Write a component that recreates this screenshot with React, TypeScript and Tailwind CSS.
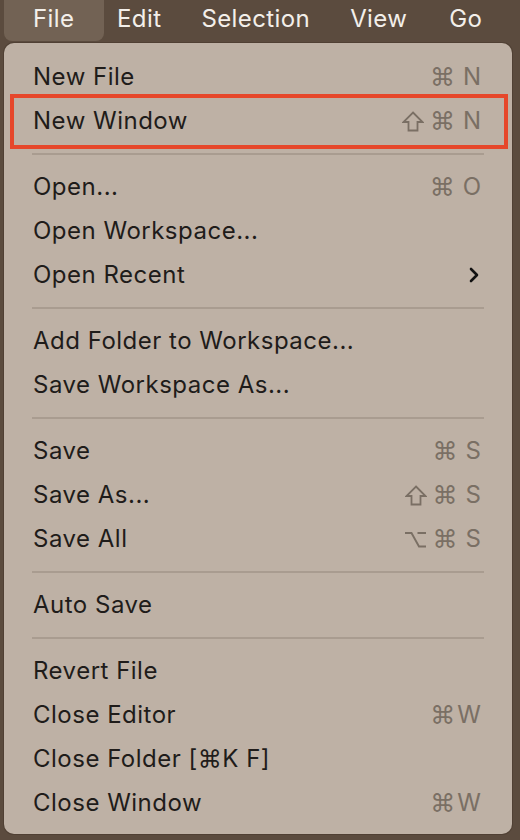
import React from 'react'

type Item = { label: string; keys?: string[]; tight?: boolean; sub?: boolean; marked?: boolean }

// groups of menu rows, separators between groups
const GROUPS: Item[][] = [
  [
    { label: 'New File', keys: ['⌘', 'N'] },
    { label: 'New Window', keys: ['⇧', '⌘', 'N'], marked: true },
  ],
  [
    { label: 'Open...', keys: ['⌘', 'O'] },
    { label: 'Open Workspace...' },
    { label: 'Open Recent', sub: true },
  ],
  [{ label: 'Add Folder to Workspace...' }, { label: 'Save Workspace As...' }],
  [
    { label: 'Save', keys: ['⌘', 'S'] },
    { label: 'Save As...', keys: ['⇧', '⌘', 'S'] },
    { label: 'Save All', keys: ['⌥', '⌘', 'S'] },
  ],
  [{ label: 'Auto Save' }],
  [
    { label: 'Revert File' },
    { label: 'Close Editor', keys: ['⌘', 'W'], tight: true },
    { label: 'Close Folder [⌘K F]' },
    { label: 'Close Window', keys: ['⌘', 'W'], tight: true },
  ],
]

const font = { fontFamily: 'Inter, "DejaVu Sans", sans-serif' }

function Key({ k }: { k: string }) {
  if (k === '⇧')
    return (
      <svg width="22" height="21" viewBox="0 0 22 21" className="-mr-[2px]">
        <path d="M11 1.5 L20.5 11 H15.5 V19.5 H6.5 V11 H1.5 Z" fill="none" stroke="currentColor" strokeWidth="1.8" strokeLinejoin="miter" />
      </svg>
    )
  if (k === '⌥')
    return (
      <svg width="23" height="17" viewBox="0 0 23 17" className="-mr-[2px]">
        <path d="M1 2 H7.5 L15 15.5 H22 M13.5 2 H22" fill="none" stroke="currentColor" strokeWidth="1.9" />
      </svg>
    )
  if (k === '⌘')
    return (
      <span className="text-[25px] leading-none" style={{ fontFamily: '"DejaVu Sans", sans-serif' }}>
        {k}
      </span>
    )
  return <span className="text-[24px] leading-none">{k}</span>
}

function Row({ item }: { item: Item }) {
  return (
    <div className="relative flex h-[44px] items-center justify-between pl-[29px] pr-[31px]">
      <span className="text-[24px] tracking-[0.5px] text-[#1f1c1a]">{item.label}</span>
      {item.keys && (
        <div className={item.tight ? 'flex items-center gap-[2px] text-[#7a6f64]' : 'flex items-center gap-[8px] text-[#7a6f64]'}>
          {item.keys.map((k, i) => (
            <Key key={i} k={k} />
          ))}
        </div>
      )}
      {item.sub && (
        <svg width="12" height="16" viewBox="0 0 12 16" className="mr-[1px]">
          <polyline points="3,2 9,8 3,14" fill="none" stroke="#111" strokeWidth="2.6" strokeLinecap="round" strokeLinejoin="round" />
        </svg>
      )}
      {item.marked && (
        <div className="pointer-events-none absolute -top-[5px] -bottom-[6px] left-[6px] right-[4px] border-[4px] border-[#e6472b]" />
      )}
    </div>
  )
}

export default function App() {
  return (
    <div className="h-[840px] w-[520px] overflow-hidden bg-[#5b4b3e]" style={font}>
      {/* menu bar */}
      <div className="flex h-[41px] items-center text-[24px] tracking-[0.4px] text-[#f3efea]">
        <div className="ml-[4px] -mt-[10px] flex h-[51px] w-[100px] items-end rounded-[8px] bg-[#726254] pb-[4px] pl-[29px]">
          File
        </div>
        <span className="ml-[13px] mt-[-3px]">Edit</span>
        <span className="ml-[40px] mt-[-3px]">Selection</span>
        <span className="ml-[40px] mt-[-3px]">View</span>
        <span className="ml-[42px] mt-[-3px]">Go</span>
      </div>

      {/* dropdown */}
      <div className="ml-[4px] mt-[2px] w-[508px] rounded-[10px] bg-[#beb1a5] pt-[12px] pb-[9px] shadow-[0_0_0_1px_rgba(60,45,35,0.35)]">
        {GROUPS.map((g, gi) => (
          <div key={gi}>
            {gi > 0 && <div className="mx-[28px] mt-[10px] mb-[10px] h-[2px] bg-[#a99c90]" />}
            {g.map((it) => (
              <Row key={it.label} item={it} />
            ))}
          </div>
        ))}
      </div>
    </div>
  )
}
